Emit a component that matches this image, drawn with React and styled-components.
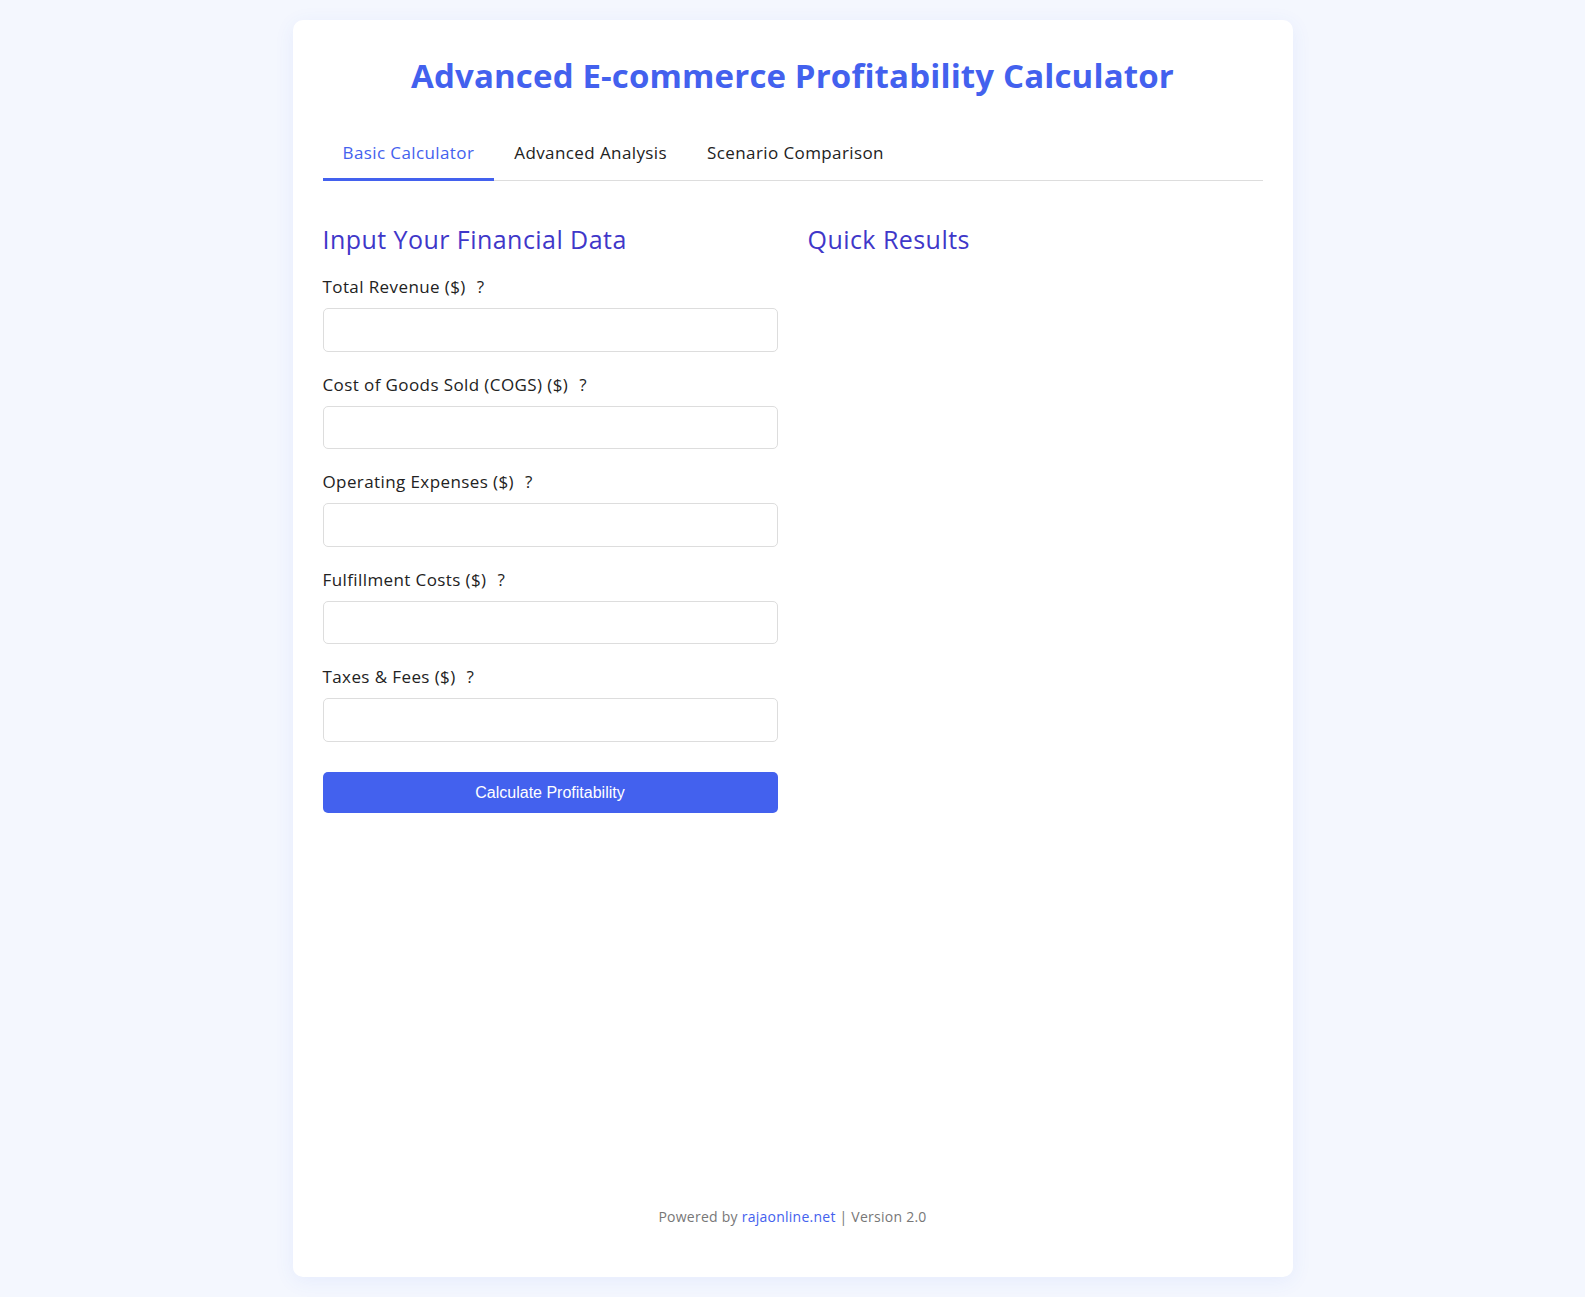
import React from "react";
import styled, { createGlobalStyle } from "styled-components";

const GlobalStyle = createGlobalStyle`
  * { box-sizing: border-box; }
  body {
    margin: 0;
    padding: 20px;
    background: #f4f7fe;
    font-family: "Open Sans", "Noto Sans", sans-serif;
    color: #222;
  }
`;

const Card = styled.div`
  width: 1000px;
  margin: 0 auto;
  background: #fff;
  border-radius: 10px;
  box-shadow: 0 4px 20px rgba(67, 97, 238, 0.08);
  padding: 30px;
`;

const Title = styled.h1`
  margin: 0 0 28px;
  text-align: center;
  font-size: 33px;
  line-height: 52px;
  font-weight: 700;
  color: #4361ee;
  letter-spacing: 0.15px;
`;

const TabBar = styled.div`
  display: flex;
  border-bottom: 1px solid #ddd;
  margin-bottom: 20px;
`;

const Tab = styled.div`
  padding: 10px 20px 12px;
  font-size: 17px;
  line-height: 26px;
  letter-spacing: 0.4px;
  color: ${(p) => (p.$active ? "#4361ee" : "#222")};
  border-bottom: 3px solid ${(p) => (p.$active ? "#4361ee" : "transparent")};
  margin-bottom: -1px;
  cursor: pointer;
`;

const Panel = styled.div`
  display: grid;
  grid-template-columns: 1fr 1fr;
  gap: 30px;
  min-height: 955px;
  align-content: start;
`;

const Column = styled.div`
  display: flex;
  flex-direction: column;
`;

const SectionTitle = styled.h2`
  margin: 20px 0 18px;
  font-size: 25px;
  line-height: 36px;
  font-weight: 500;
  letter-spacing: 0.45px;
  color: #3f37c9;
`;

const Field = styled.div`
  display: flex;
  flex-direction: column;
  margin-bottom: 21px;
`;

const Label = styled.label`
  font-size: 17px;
  line-height: 24px;
  font-weight: 500;
  letter-spacing: 0.4px;
  color: #222;
  margin-bottom: 9px;
`;

const Help = styled.span`
  margin-left: 11px;
`;

const Input = styled.input`
  height: 43.6px;
  width: 100%;
  border: 1px solid #ddd;
  border-radius: 5px;
  padding: 10px 12px;
  font-size: 16px;
  background: #fff;
  outline: none;
`;

const Button = styled.button`
  margin-top: 9px;
  height: 41.5px;
  width: 100%;
  border: none;
  border-radius: 5px;
  background: #4361ee;
  color: #fff;
  font-family: "Liberation Sans", Arial, sans-serif;
  font-size: 16px;
  cursor: pointer;
`;

const Footer = styled.footer`
  margin-top: 30px;
  padding: 20px 0;
  text-align: center;
  font-size: 14px;
  line-height: 21px;
  letter-spacing: 0.25px;
  color: #777;
`;

const Link = styled.a`
  color: #4361ee;
  text-decoration: none;
`;

const fields = [
  "Total Revenue ($)",
  "Cost of Goods Sold (COGS) ($)",
  "Operating Expenses ($)",
  "Fulfillment Costs ($)",
  "Taxes & Fees ($)",
];

export default function App() {
  return (
    <>
      <GlobalStyle />
      <Card>
        <Title>Advanced E-commerce Profitability Calculator</Title>
        <TabBar>
          <Tab $active>Basic Calculator</Tab>
          <Tab>Advanced Analysis</Tab>
          <Tab>Scenario Comparison</Tab>
        </TabBar>
        <Panel>
          <Column>
            <SectionTitle>Input Your Financial Data</SectionTitle>
            {fields.map((f) => (
              <Field key={f}>
                <Label>
                  {f}
                  <Help>?</Help>
                </Label>
                <Input type="number" />
              </Field>
            ))}
            <Button>Calculate Profitability</Button>
          </Column>
          <Column>
            <SectionTitle>Quick Results</SectionTitle>
          </Column>
        </Panel>
        <Footer>
          Powered by <Link href="#">rajaonline.net</Link> | Version 2.0
        </Footer>
      </Card>
    </>
  );
}
